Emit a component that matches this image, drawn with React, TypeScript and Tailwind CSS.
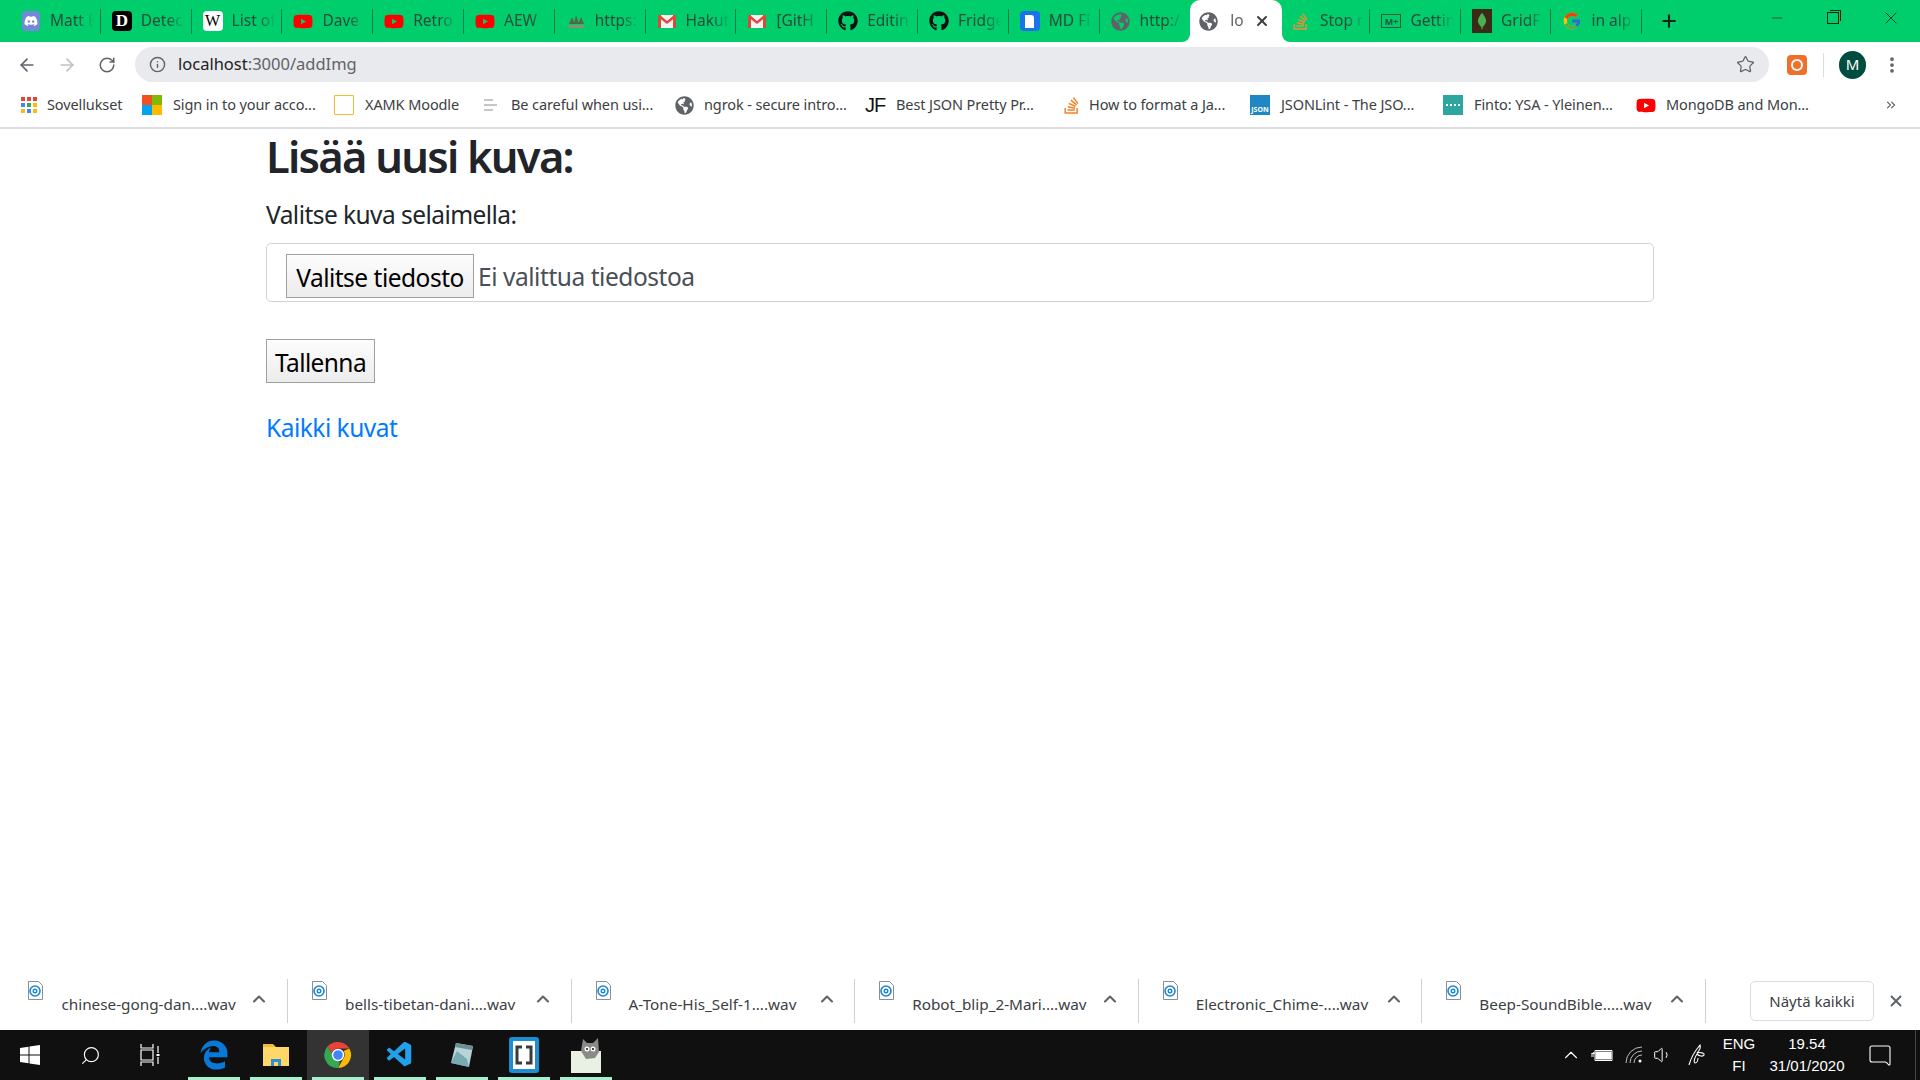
import React from 'react';
import { ArrowLeft, ArrowRight, RotateCw, Info, Star, MoreVertical, ChevronUp, X, Plus, Minus, Search, Volume1, MessageSquare, ChevronsRight } from 'lucide-react';
import { FaDiscord, FaGithub, FaGlobeAmericas, FaStackOverflow, FaEdgeLegacy, FaYoutube } from 'react-icons/fa';
import { FcGoogle } from 'react-icons/fc';
import { VscVscode } from 'react-icons/vsc';

const Gmail = () => (
    <svg viewBox="0 0 20 20" className="w-5 h-5">
        <path d="M1 4h18v13H1z" fill="#f3f3f3" />
        <path d="M1 4h3v13H1zM16 4h3v13h-3z" fill="#d54c3f" />
        <path d="M1 4h2l7 6 7-6h2v2l-9 7-9-7z" fill="#e5483b" />
    </svg>
);

const YouTube = () => <FaYoutube size={21} className="text-[#ff0000]" />;

const Globe = () => <FaGlobeAmericas size={19} className="text-[#5f6368]" />;

const Favicon = ({ kind }: { kind: string }) => {
    switch (kind) {
        case 'discord':
            return (
                <div className="w-[18px] h-5 rounded bg-[#7289da] flex items-center justify-center">
                    <FaDiscord size={14} className="text-white" />
                </div>
            );
        case 'd':
            return <div className="w-5 h-5 rounded-sm bg-black text-white flex items-center justify-center text-[17px] font-bold font-['Liberation_Serif',serif]">D</div>;
        case 'w':
            return <div className="w-5 h-5 rounded-sm bg-white text-black flex items-center justify-center text-[16px] font-['Liberation_Serif',serif]">W</div>;
        case 'yt':
            return <YouTube />;
        case 'book':
            return (
                <svg viewBox="0 0 20 20" className="w-5 h-5">
                    <path d="M2 14h16v3H2z" fill="#8a8f7a" />
                    <path d="M3 13l3-7 3 7zM8 13l2-9 3 9zM12 13l3-7 3 7z" fill="#4d6b45" />
                </svg>
            );
        case 'gmail':
            return <Gmail />;
        case 'github':
            return <FaGithub size={20} className="text-[#111]" />;
        case 'md':
            return (
                <div className="w-5 h-5 rounded-sm bg-[#1a73e8] flex items-center justify-center">
                    <div className="w-[9px] h-[13px] bg-white rounded-tr-[3px]" />
                </div>
            );
        case 'globe':
            return <Globe />;
        case 'so':
            return <FaStackOverflow size={19} className="text-[#e8913a]" />;
        case 'mdown':
            return (
                <div className="w-5 h-[14px] border border-[#1f5a3c] flex items-center justify-center text-[9px] font-bold leading-none text-[#1f5a3c]">M+</div>
            );
        case 'mongo':
            return (
                <div className="w-5 h-6 bg-[#3a2a17] flex items-center justify-center">
                    <svg viewBox="0 0 12 22" className="h-5 w-[10px]">
                        <path d="M6 1c3 4 5 7 5 10s-3 6-4 7l-.5 3h-1L5 18c-1-1-4-4-4-7s2-6 5-10z" fill="#4caf50" />
                    </svg>
                </div>
            );
        case 'google':
            return <FcGoogle size={20} />;
        default:
            return null;
    }
};

const tabsLeft = [
    { icon: 'discord', title: 'Matt E' },
    { icon: 'd', title: 'Detec' },
    { icon: 'w', title: 'List of' },
    { icon: 'yt', title: 'Dave' },
    { icon: 'yt', title: 'Retro' },
    { icon: 'yt', title: 'AEW' },
    { icon: 'book', title: 'https:' },
    { icon: 'gmail', title: 'Hakut' },
    { icon: 'gmail', title: '[GitH' },
    { icon: 'github', title: 'Editin' },
    { icon: 'github', title: 'Fridge' },
    { icon: 'md', title: 'MD Fi' },
    { icon: 'globe', title: 'http:/' },
];

const tabsRight = [
    { icon: 'so', title: 'Stop r' },
    { icon: 'mdown', title: 'Gettin' },
    { icon: 'mongo', title: 'GridF' },
    { icon: 'google', title: 'in alp' },
];

const Tab = ({ icon, title, separator, narrow }: { icon: string; title: string; separator: boolean; narrow?: boolean }) => (
    <div className={`${narrow ? 'w-[90.5px]' : 'w-[90.8px]'} h-[42px] shrink-0 flex items-center pl-[11px]`}>
        <div className="w-5 flex justify-center shrink-0">
            <Favicon kind={icon} />
        </div>
        <span className="ml-[9px] w-[44px] overflow-hidden whitespace-nowrap text-[15.5px] text-[#2b4a3a] [mask-image:linear-gradient(to_right,black_60%,transparent)]">{title}</span>
        {separator && <div className="ml-auto w-px h-[25px] bg-[#157a4b]" />}
    </div>
);

const bookmarks = [
    { icon: 'apps', label: 'Sovellukset', width: 123, gap: 8 },
    { icon: 'ms', label: 'Sign in to your acco...', width: 192, gap: 11 },
    { icon: 'xamk', label: 'XAMK Moodle', width: 150, gap: 11 },
    { icon: 'lines', label: 'Be careful when usi...', width: 190, gap: 7 },
    { icon: 'globe', label: 'ngrok - secure intro...', width: 191, gap: 10 },
    { icon: 'jf', label: 'Best JSON Pretty Pr...', width: 196, gap: 11 },
    { icon: 'so', label: 'How to format a Ja...', width: 189, gap: 8 },
    { icon: 'json', label: 'JSONLint - The JSO...', width: 193, gap: 11 },
    { icon: 'finto', label: 'Finto: YSA - Yleinen...', width: 193, gap: 11 },
    { icon: 'yt', label: 'MongoDB and Mon...', width: 190, gap: 10 },
];

const BookmarkIcon = ({ kind }: { kind: string }) => {
    switch (kind) {
        case 'apps':
            return (
                <div className="grid grid-cols-3 gap-[2px] w-[17px]">
                    {['#ea4335', '#ea4335', '#ea4335', '#4285f4', '#34a853', '#fbbc05', '#fbbc05', '#4285f4', '#fbbc05'].map((c, i) => (
                        <div key={i} className="w-[4px] h-[4px]" style={{ backgroundColor: c }} />
                    ))}
                </div>
            );
        case 'ms':
            return (
                <div className="grid grid-cols-2 w-5 h-5">
                    <div className="bg-[#f25022]" />
                    <div className="bg-[#7fba00]" />
                    <div className="bg-[#00a4ef]" />
                    <div className="bg-[#ffb900]" />
                </div>
            );
        case 'xamk':
            return <div className="w-5 h-5 border border-[#f9b92c] rounded-[1px]" />;
        case 'lines':
            return (
                <div className="w-[13px] mr-[7px] flex flex-col gap-[3px]">
                    <div className="h-[2px] w-[9px] bg-[#c4c7c5]" />
                    <div className="h-[2px] bg-[#c4c7c5]" />
                    <div className="h-[2px] w-[9px] bg-[#c4c7c5]" />
                </div>
            );
        case 'globe':
            return <Globe />;
        case 'jf':
            return <span className="text-[20px] leading-5 text-[#111] font-['Liberation_Sans',sans-serif] tracking-[-1px]">JF</span>;
        case 'so':
            return <FaStackOverflow size={19} className="text-[#f48024]" />;
        case 'json':
            return <div className="w-5 h-5 bg-[#1f88c4] text-white text-[7px] font-bold flex items-end justify-center leading-[10px]">JSON</div>;
        case 'finto':
            return (
                <div className="w-5 h-5 bg-[#2ea6a0] flex items-center justify-center gap-[2px]">
                    {[0, 1, 2, 3].map((i) => (
                        <div key={i} className="w-[2px] h-[2px] bg-white" />
                    ))}
                </div>
            );
        case 'yt':
            return <YouTube />;
        default:
            return null;
    }
};

const downloads = [
    'chinese-gong-dan....wav',
    'bells-tibetan-dani....wav',
    'A-Tone-His_Self-1....wav',
    'Robot_blip_2-Mari....wav',
    'Electronic_Chime-....wav',
    'Beep-SoundBible.....wav',
];

const FileIcon = () => (
    <svg viewBox="0 0 15 19" className="w-[15px] h-[19px]">
        <path d="M.5.5h10l4 4v14H.5z" fill="#fff" stroke="#8a8d91" />
        <circle cx="7" cy="10" r="5" fill="none" stroke="#1a86d8" strokeWidth="1.6" />
        <circle cx="7" cy="10" r="1.8" fill="none" stroke="#1a86d8" strokeWidth="1.4" />
    </svg>
);

const TaskbarItem = ({ active, running, children }: { active?: boolean; running?: boolean; children: React.ReactNode }) => (
    <div className={`relative w-[62px] h-[50px] flex items-center justify-center shrink-0 ${active ? 'bg-[#333333]' : ''}`}>
        {children}
        {running && <div className="absolute bottom-0 left-[5px] right-[5px] h-[3px] bg-[#a4f0cf]" />}
    </div>
);

const App = () => {
    return (
        <div className="w-[1920px] h-screen overflow-hidden flex flex-col bg-white font-['Noto_Sans',sans-serif]">
            {/* tab strip */}
            <div className="h-[42px] bg-[#00ce6c] flex items-start pl-[10px] shrink-0">
                {tabsLeft.map((t, i) => (
                    <Tab key={i} icon={t.icon} title={t.title} separator={i < tabsLeft.length - 1} />
                ))}
                <div className="relative z-10 w-[92px] -mr-[2.4px] h-[42px] shrink-0 bg-white rounded-t-[10px] flex items-center pl-[9px]">
                    <Globe />
                    <span className="ml-[12px] w-[20px] overflow-hidden whitespace-nowrap text-[15.5px] text-[#5f6368] [mask-image:linear-gradient(to_right,black_60%,transparent)]">lo</span>
                    <X size={16} strokeWidth={3} className="ml-[4px] text-[#3c4043]" />
                    <div className="absolute bottom-0 -left-[8px] w-2 h-2 bg-white">
                        <div className="w-2 h-2 bg-[#00ce6c] rounded-br-[8px]" />
                    </div>
                    <div className="absolute bottom-0 -right-[8px] w-2 h-2 bg-white">
                        <div className="w-2 h-2 bg-[#00ce6c] rounded-bl-[8px]" />
                    </div>
                </div>
                {tabsRight.map((t, i) => (
                    <Tab key={i} icon={t.icon} title={t.title} separator narrow />
                ))}
                <div className="ml-[17px] h-[42px] flex items-center">
                    <Plus size={20} strokeWidth={2.5} className="text-[#10231a]" />
                </div>
                <div className="ml-auto h-[42px] flex items-start">
                    <div className="w-[55px] h-[36px] flex items-center justify-center">
                        <Minus size={16} strokeWidth={1} className="text-[#10231a]" />
                    </div>
                    <div className="w-[58px] h-[36px] flex items-center justify-center">
                        <div className="relative w-[12px] h-[12px] border border-[#10231a]">
                            <div className="absolute -top-[3px] -right-[3px] w-[11px] h-[11px] border-t border-r border-[#10231a]" />
                        </div>
                    </div>
                    <div className="w-[58px] h-[36px] flex items-center justify-center">
                        <X size={20} strokeWidth={1} className="text-[#10231a]" />
                    </div>
                </div>
            </div>

            {/* toolbar */}
            <div className="h-[45px] flex items-center shrink-0">
                <div className="w-[135px] flex items-center pl-[17px] gap-[20px]">
                    <ArrowLeft size={20} strokeWidth={2} className="text-[#5f6368]" />
                    <ArrowRight size={20} strokeWidth={2} className="text-[#bdc1c6]" />
                    <RotateCw size={18} strokeWidth={2} className="ml-px text-[#5f6368]" />
                </div>
                <div className="w-[1634px] h-[35px] bg-[#e8eaed] rounded-full flex items-center pl-[14px] pr-[14px]">
                    <Info size={17} strokeWidth={2} className="text-[#5f6368]" />
                    <span className="ml-[12px] text-[16.5px] text-[#202124]">
                        localhost<span className="text-[#5f6368]">:3000/addImg</span>
                    </span>
                    <Star size={19} strokeWidth={1.6} className="ml-auto text-[#5f6368]" />
                </div>
                <div className="ml-[18px] w-5 h-5 bg-[#f0702a] rounded-[4px] flex items-center justify-center shrink-0">
                    <div className="w-[12px] h-[12px] rounded-full border-2 border-white" />
                </div>
                <div className="ml-[16px] w-px h-[24px] bg-[#dadce0]" />
                <div className="ml-[15px] w-[27px] h-[28px] rounded-full bg-[#004d40] text-white text-[15px] flex items-center justify-center">M</div>
                <MoreVertical size={20} strokeWidth={2.5} className="ml-[16px] text-[#5f6368]" />
            </div>

            {/* bookmarks */}
            <div className="h-[42px] border-b-2 border-[#dcdee2] flex items-center pl-[19px] pb-[4px] shrink-0">
                {bookmarks.map((b, i) => (
                    <div key={i} className="flex items-center shrink-0" style={{ width: b.width }}>
                        <div className="w-5 flex justify-center shrink-0">
                            <BookmarkIcon kind={b.icon} />
                        </div>
                        <span className="whitespace-nowrap text-[14.5px] tracking-[-0.1px] text-[#3c4043]" style={{ marginLeft: b.gap }}>{b.label}</span>
                    </div>
                ))}
                <ChevronsRight size={14} className="ml-[58px] text-[#5f6368]" />
            </div>

            {/* page */}
            <main className="flex-1 pl-[266px] w-[1654px] box-content text-[#212529]">
                <h1 className="text-[43.5px] leading-[54px] font-semibold tracking-[-1.75px]">Lisää uusi kuva:</h1>
                <p className="mt-[13px] text-[24.5px] tracking-[-0.55px] leading-[37px]">Valitse kuva selaimella:</p>
                <div className="mt-[10px] w-[1388px] h-[59px] border border-[#ced4da] rounded-[5px] flex items-start pl-[19px] pt-[10px]">
                    <button className="w-[188px] h-[44px] pt-[4px] border border-[#a0a0a0] bg-gradient-to-b from-[#fdfdfd] to-[#ececec] text-[24.5px] tracking-[-0.5px] text-black leading-none">Valitse tiedosto</button>
                    <span className="ml-[4px] mt-[1px] text-[24.5px] tracking-[-0.45px] leading-[43px] text-[#495057]">Ei valittua tiedostoa</span>
                </div>
                <button className="mt-[37px] block w-[109px] h-[44px] pt-[4px] border border-[#a0a0a0] bg-gradient-to-b from-[#fdfdfd] to-[#ececec] text-[24.5px] tracking-[-0.6px] text-black leading-none">Tallenna</button>
                <a className="mt-[26px] block text-[24.5px] tracking-[-0.5px] leading-[37px] text-[#007bff]">Kaikki kuvat</a>
            </main>

            {/* download shelf */}
            <div className="h-[58px] flex items-center pl-[4.4px] shrink-0">
                {downloads.map((d, i) => (
                    <div key={i} className="w-[283.6px] h-[44px] flex items-start shrink-0 border-r border-[#cfd1d4] pl-[24px]">
                        <div className="pt-[2px]">
                            <FileIcon />
                        </div>
                        <span className="ml-[18px] mt-[15px] w-[188px] whitespace-nowrap text-[15.3px] leading-[20px] text-[#3c4043]">{d}</span>
                        <ChevronUp size={20} strokeWidth={2.5} className="mt-[10px] text-[#5f6368] shrink-0" />
                    </div>
                ))}
                <button className="ml-[44px] w-[124px] h-[40px] border border-[#dadce0] rounded-[5px] text-[15px] text-[#3c4043] shrink-0">Näytä kaikki</button>
                <X size={18} strokeWidth={2.5} className="ml-[13px] text-[#5f6368]" />
            </div>

            {/* taskbar */}
            <div className="h-[50px] bg-[#101010] flex items-center shrink-0 text-white">
                <div className="w-[60px] flex justify-center">
                    <svg viewBox="0 0 20 20" className="w-5 h-5" fill="#fff">
                        <path d="M0 3l8.5-1.2v7.7H0zM9.5 1.6L20 0v9.5H9.5zM0 10.5h8.5v7.7L0 17zM9.5 10.5H20V20L9.5 18.4z" />
                    </svg>
                </div>
                <div className="w-[60px] flex justify-center">
                    <Search size={21} strokeWidth={1.3} className="-scale-x-100" />
                </div>
                <div className="w-[63px] flex justify-center pr-[3px]">
                    <svg viewBox="0 0 20 24" className="w-5 h-6" fill="none" stroke="#fff" strokeWidth="1.2">
                        <path d="M1 1v4h12V1M1 7h12v10H1zM1 23v-4h12v4M18 3v7M18 14v7" />
                        <path d="M16.5 11h3v2h-3z" fill="#fff" stroke="none" />
                    </svg>
                </div>
                <TaskbarItem running>
                    <FaEdgeLegacy size={30} className="text-[#0a78d6]" />
                </TaskbarItem>
                <TaskbarItem running>
                    <svg viewBox="0 0 28 28" className="w-7 h-7">
                        <path d="M1 3h10l3 3H1z" fill="#f0b93a" />
                        <path d="M1 6h26v19H1z" fill="#ffd768" />
                        <path d="M9 25v-7h10v7h-3v-4h-4v4z" fill="#2e8fd9" />
                    </svg>
                </TaskbarItem>
                <TaskbarItem active running>
                    <svg viewBox="0 0 28 28" className="w-7 h-7">
                        <path d="M14 1a13 13 0 0 1 11.3 6.5H14a6.5 6.5 0 0 0-6.2 4.5L3.5 5.5A13 13 0 0 1 14 1z" fill="#ea4335" />
                        <path d="M25.3 7.5A13 13 0 0 1 14 27l5.6-9.7A6.5 6.5 0 0 0 19.5 10z" fill="#fbbc05" />
                        <path d="M14 27A13 13 0 0 1 3.5 5.5L9 14.5a6.5 6.5 0 0 0 7 6z" fill="#34a853" />
                        <circle cx="14" cy="14" r="5.5" fill="#4285f4" stroke="#fff" strokeWidth="1.4" />
                    </svg>
                </TaskbarItem>
                <TaskbarItem running>
                    <VscVscode size={30} className="text-[#23a0ea]" />
                </TaskbarItem>
                <TaskbarItem running>
                    <svg viewBox="0 0 28 28" className="w-7 h-7">
                        <path d="M8 2l17 3-4 21-18-4z" fill="#b8d4d6" />
                        <path d="M8 2l17 3-1 4L7 6z" fill="#6e8f94" />
                        <path d="M3 22l6-12 10 8 2 8z" fill="#5d9ba3" opacity="0.7" />
                    </svg>
                </TaskbarItem>
                <TaskbarItem running>
                    <svg viewBox="0 0 30 36" className="w-[30px] h-[36px]">
                        <rect x="0" y="0" width="30" height="36" rx="3" fill="#1d8ed1" />
                        <rect x="4" y="4" width="22" height="28" fill="#fff" />
                        <path d="M13 10H8v16h5M17 10h5v16h-5" fill="none" stroke="#3a3a3a" strokeWidth="3" />
                    </svg>
                </TaskbarItem>
                <TaskbarItem running>
                    <svg viewBox="0 0 30 36" className="w-[30px] h-[36px]">
                        <path d="M0 14h30v22H0z" fill="#e8f1e4" />
                        <path d="M10 14L12 2l4 4h6l5-5 1 14-4 6-9 1z" fill="#8a8a88" />
                        <circle cx="16" cy="12" r="2.5" fill="#fff" />
                        <circle cx="22" cy="12" r="2.5" fill="#fff" />
                        <circle cx="16" cy="12" r="1" fill="#111" />
                        <circle cx="22" cy="12" r="1" fill="#111" />
                    </svg>
                </TaskbarItem>

                {/* tray */}
                <div className="ml-auto flex items-center text-white">
                    <ChevronUp size={22} strokeWidth={1.2} />
                    <svg viewBox="0 0 22 14" className="ml-[9px] w-[22px] h-[14px]" fill="none" stroke="#fff">
                        <path d="M4 2.5h17v10H4z" />
                        <path d="M5 4h15v7H5zM0 6h3V4M0 8h3" fill="#fff" />
                    </svg>
                    <svg viewBox="0 0 18 18" className="ml-[12px] w-[18px] h-[18px]" fill="none" stroke="#bbb" strokeWidth="1">
                        <path d="M1 17A16 16 0 0 1 17 1M5 17A12 12 0 0 1 17 5M9 17a8 8 0 0 1 8-8" />
                        <circle cx="15" cy="15" r="1.5" fill="#fff" stroke="none" />
                    </svg>
                    <Volume1 size={20} strokeWidth={1.2} className="ml-[10px]" />
                    <svg viewBox="0 0 18 24" className="ml-[15px] w-[18px] h-[24px]" fill="none" stroke="#fff" strokeWidth="1.1">
                        <path d="M1 22c2-8 6-14 11-20 1 3-1 6-3 8 3-1 8 0 7 2s-5 1-7-1c-2 3-4 8-2 9 2 0 3-3 3-5" />
                    </svg>
                    <div className="ml-[12px] w-[42px] text-center text-[15px] leading-[22px] font-['Liberation_Sans',sans-serif]">
                        <div>ENG</div>
                        <div>FI</div>
                    </div>
                    <div className="ml-[2px] w-[90px] text-center text-[15px] leading-[22px] font-['Liberation_Sans',sans-serif]">
                        <div>19.54</div>
                        <div>31/01/2020</div>
                    </div>
                    <MessageSquare size={24} strokeWidth={1.1} className="ml-[16px] mr-[23px] -scale-x-100" />
                </div>
                <div className="w-px h-[50px] bg-[#444]" />
                <div className="w-[4px]" />
            </div>
        </div>
    );
};

export default App;
